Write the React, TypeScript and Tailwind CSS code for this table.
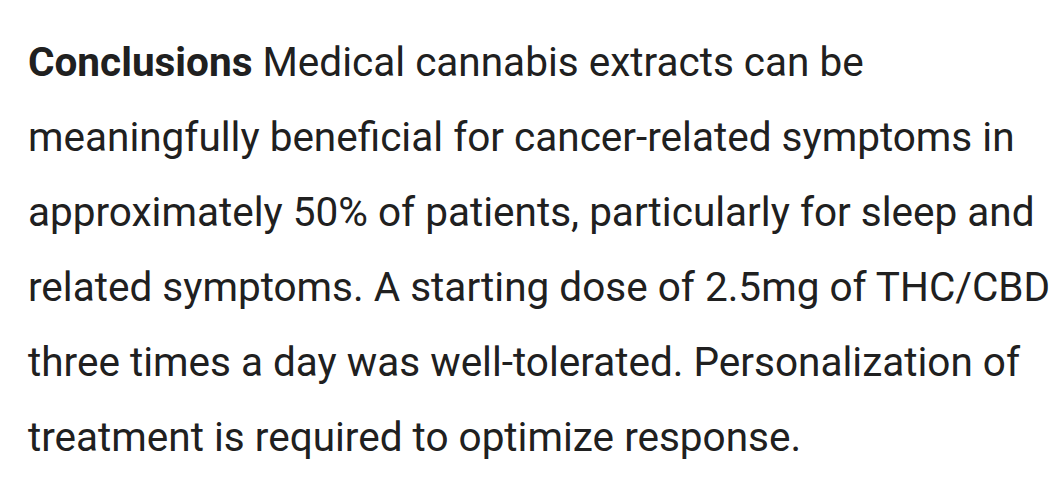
export default function App() {
  return (
    <div className="w-[1056px] h-[500px] bg-white overflow-hidden">
      <p
        className="pl-[28px] pr-[4px] pt-[25px] text-[40.5px] leading-[75px] text-[#202020]"
        style={{ fontFamily: "Roboto, sans-serif" }}
      >
        <span className="font-bold">Conclusions</span> Medical cannabis extracts can be meaningfully beneficial for cancer-related symptoms in approximately 50% of patients, particularly for sleep and related symptoms. A starting dose of 2.5mg of THC/CBD three times a day was well-tolerated. Personalization of treatment is required to optimize response.
      </p>
    </div>
  );
}
